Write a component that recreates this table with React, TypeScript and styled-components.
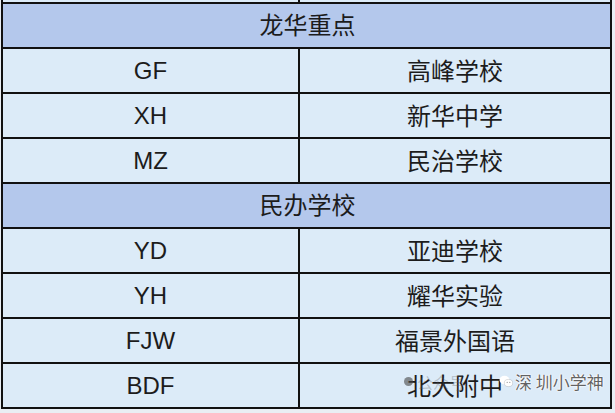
import React from "react";
import styled, { createGlobalStyle } from "styled-components";

const Global = createGlobalStyle`
  html, body { margin: 0; padding: 0; background: #e9eef4; }
  body { width: 615px; height: 413px; overflow: hidden; }
`;

const Page = styled.div`
  position: relative;
  width: 615px;
  height: 413px;
  padding-left: 1px;
  box-sizing: border-box;
`;

const Table = styled.div`
  width: 611px;
  box-sizing: border-box;
  border-left: 2px solid #111;
  border-right: 2px solid #111;
  display: flex;
  flex-direction: column;
`;

const Row = styled.div<{ $h?: number }>`
  display: grid;
  grid-template-columns: 297px 1fr;
  height: ${(p) => p.$h ?? 43}px;
  border-bottom: 2px solid #111;
  background: #dcebf8;
`;

const Cell = styled.div<{ $divider?: boolean; $cjk?: boolean }>`
  display: flex;
  align-items: center;
  justify-content: center;
  border-right: ${(p) => (p.$divider ? "2px solid #111" : "none")};
  font-family: ${(p) =>
    p.$cjk
      ? '"Noto Sans CJK SC", "Noto Sans", sans-serif'
      : '"Liberation Sans", Arial, sans-serif'};
  font-size: 24px;
  color: #1c1c1c;
  line-height: 1;
  padding-bottom: ${(p) => (p.$cjk ? 2 : 0)}px;
`;

const Header = styled.div`
  height: 45px;
  border-bottom: 2px solid #111;
  background: #b4c8ec;
  display: flex;
  align-items: center;
  justify-content: center;
  font-family: "Noto Sans CJK SC", "Noto Sans", sans-serif;
  font-size: 24px;
  line-height: 1;
  color: #1c1c1c;
  padding: 0 0 4px 2px;
  box-sizing: border-box;
`;

const Watermark = styled.div`
  position: absolute;
  left: 404px;
  top: 373px;
  display: flex;
  align-items: center;
  gap: 2px;
  font-family: "Noto Sans CJK SC", sans-serif;
  font-size: 16px;
  line-height: 1;
  pointer-events: none;
`;

const Dot = styled.span`
  width: 9px;
  height: 9px;
  border-radius: 50%;
  background: rgba(70, 70, 70, 0.6);
  margin-right: 2px;
`;

const Faint = styled.span`
  color: rgba(90, 90, 90, 0.3);
  margin-right: 32px;
`;

const Brand = styled.span`
  color: rgba(70, 70, 70, 0.85);
  font-size: 17px;
  text-shadow: 0 0 1px #fff, 0 0 2px #fff, 0 0 2px #fff;
`;

type Item = { code: string; name: string };

const groups: { title: string; items: Item[] }[] = [
  {
    title: "龙华重点",
    items: [
      { code: "GF", name: "高峰学校" },
      { code: "XH", name: "新华中学" },
      { code: "MZ", name: "民治学校" },
    ],
  },
  {
    title: "民办学校",
    items: [
      { code: "YD", name: "亚迪学校" },
      { code: "YH", name: "耀华实验" },
      { code: "FJW", name: "福景外国语" },
      { code: "BDF", name: "北大附中" },
    ],
  },
];

const WeChatIcon = () => (
  <svg width="14" height="13" viewBox="0 0 14 13">
    <ellipse cx="5.5" cy="5" rx="5" ry="4.2" fill="#fff" />
    <ellipse cx="9.5" cy="8" rx="4.2" ry="3.6" fill="#fff" stroke="rgba(120,120,120,0.4)" strokeWidth="0.6" />
    <circle cx="8.2" cy="7.4" r="0.6" fill="#999" />
    <circle cx="10.8" cy="7.4" r="0.6" fill="#999" />
  </svg>
);

export default function App() {
  return (
    <Page>
      <Global />
      <Table>
        <Row $h={2}>
          <Cell $divider />
          <Cell />
        </Row>
        {groups.map((g) => (
          <React.Fragment key={g.title}>
            <Header>{g.title}</Header>
            {g.items.map((it) => (
              <Row key={it.code}>
                <Cell $divider>{it.code}</Cell>
                <Cell $cjk>{it.name}</Cell>
              </Row>
            ))}
          </React.Fragment>
        ))}
      </Table>
      <Watermark>
        <Dot />
        <Faint>公众号</Faint>
        <WeChatIcon />
        <Brand>深 圳小学神</Brand>
      </Watermark>
    </Page>
  );
}
